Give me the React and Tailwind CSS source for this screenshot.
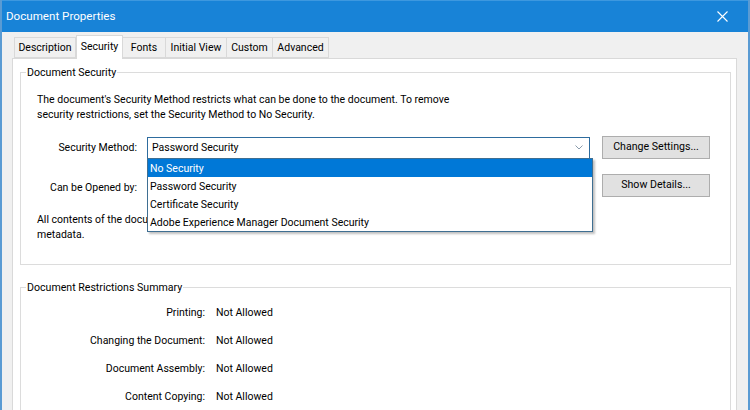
import React from 'react';

const tabs = [
  { name: 'Description', w: 'w-[62px]' },
  { name: 'Security', w: 'w-[47px]', active: true },
  { name: 'Fonts', w: 'w-[43px]' },
  { name: 'Initial View', w: 'w-[61px]' },
  { name: 'Custom', w: 'w-[46px]' },
  { name: 'Advanced', w: 'w-[56px]' },
];

const methods = ['No Security', 'Password Security', 'Certificate Security', 'Adobe Experience Manager Document Security'];

const restrictions = [
  ['Printing:', 'Not Allowed'],
  ['Changing the Document:', 'Not Allowed'],
  ['Document Assembly:', 'Not Allowed'],
  ['Content Copying:', 'Not Allowed'],
];

const WinButton = ({ children }) => (
  <button className="w-[108px] h-[23px] bg-[#e1e1e1] border border-[#adadad] text-[10.6px] text-black leading-none">
    {children}
  </button>
);

const GroupBox = ({ title, className = '', children }) => (
  <fieldset className={`border border-[#dcdcdc] ${className}`}>
    <legend className="ml-[5px] px-[1px] leading-[15px] text-[10.6px] text-black">{title}</legend>
    {children}
  </fieldset>
);

export default function App() {
  return (
    <div className="w-[750px] h-[410px] overflow-hidden bg-[#f0f0f0] border-x-2 border-[#5a9bd3] font-['Roboto',sans-serif] text-[10.5px] text-black">
      {/* Title bar */}
      <div className="h-[32px] bg-[#1883d7] flex items-center justify-between pl-[6px] pr-[22px] -mx-[2px] border-t border-[#3d98df]">
        <span className="text-white text-[11.6px]">Document Properties</span>
        <svg width="11" height="11" viewBox="0 0 11 11" className="text-white">
          <path d="M0.5 0.5L10.5 10.5M10.5 0.5L0.5 10.5" stroke="currentColor" strokeWidth="1.1" />
        </svg>
      </div>

      <div className="pl-[10px] pr-[11px]">
        {/* Tabs */}
        <div className="flex items-end pl-[2px] pt-[3px] h-[26px] relative z-10">
          {tabs.map((t) =>
            t.active ? (
              <div
                key={t.name}
                className={`${t.w} h-[24px] -mb-px bg-white border border-b-0 border-[#d9d9d9] flex items-center justify-center pb-[2px]`}
              >
                {t.name}
              </div>
            ) : (
              <div
                key={t.name}
                className={`${t.w} h-[21px] bg-[#f0f0f0] border border-l-0 first:border-l border-[#d9d9d9] flex items-center justify-center`}
              >
                {t.name}
              </div>
            )
          )}
        </div>

        {/* Tab panel */}
        <div className="h-[400px] bg-white border border-[#d9d9d9] pl-[7px] pr-[5px] pt-[6px]">
          <GroupBox title="Document Security">
            <div className="pl-[16px] pt-[12px] pb-[22px] leading-[15px]">
              <p>
                The document's Security Method restricts what can be done to the document. To remove
                <br />
                security restrictions, set the Security Method to No Security.
              </p>

              <div className="flex items-center mt-[14px]">
                <span className="w-[100px] text-right">Security Method:</span>
                <div className="relative ml-[10px] w-[443px] h-[22px] border border-[#2e6c9e] flex items-center justify-between pl-[4px] pr-[6px]">
                  <span>Password Security</span>
                  <svg width="8" height="5" viewBox="0 0 8 5">
                    <path d="M0.5 0.5L4 4L7.5 0.5" fill="none" stroke="#8a9bab" strokeWidth="1" />
                  </svg>
                  {/* open dropdown list */}
                  <div className="absolute left-[-1px] top-[20px] w-[446px] bg-white border border-[#3f6f92] shadow-[2px_2px_2px_rgba(0,0,0,0.25)] z-20">
                    {methods.map((m, i) => (
                      <div
                        key={m}
                        className={`h-[18px] flex items-center pl-[2px] pt-px ${i === 0 ? 'bg-[#0078d7] text-white' : ''}`}
                      >
                        {m}
                      </div>
                    ))}
                  </div>
                </div>
                <div className="ml-[12px]">
                  <WinButton>Change Settings...</WinButton>
                </div>
              </div>

              <div className="flex items-center mt-[15px]">
                <span className="w-[100px] text-right pt-[3px]">Can be Opened by:</span>
                <div className="ml-[10px] w-[443px]" />
                <div className="ml-[12px]">
                  <WinButton>Show Details...</WinButton>
                </div>
              </div>

              <p className="mt-[15px]">
                All contents of the document are encrypted and search engines cannot access the document's
                <br />
                metadata.
              </p>
            </div>
          </GroupBox>

          <GroupBox title="Document Restrictions Summary" className="mt-[15px]">
            <div className="pt-[10px] pb-[20px] flex flex-col gap-[12px]">
              {restrictions.map(([label, value]) => (
                <div key={label} className="flex leading-[16px]">
                  <span className="w-[184px] text-right">{label}</span>
                  <span className="ml-[11px]">{value}</span>
                </div>
              ))}
            </div>
          </GroupBox>
        </div>
      </div>
    </div>
  );
}
